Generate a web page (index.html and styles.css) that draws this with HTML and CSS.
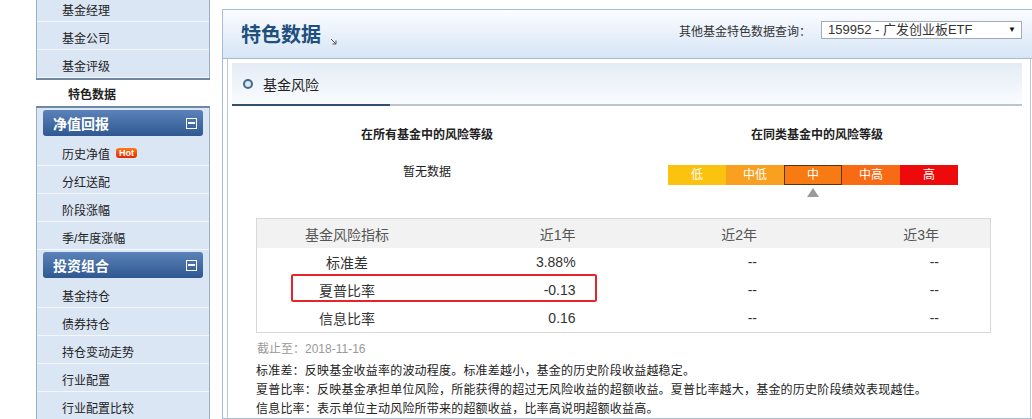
FILE: index.html
```html
<!DOCTYPE html>
<html lang="zh-CN">
<head>
    <meta charset="UTF-8">
    <meta name="viewport" content="width=device-width, initial-scale=1.0">
    <title>特色数据 - 基金风险</title>
    <link rel="stylesheet" href="styles.css">
</head>
<body>
    <div class="page">
        <aside class="sidebar">
            <div class="nav-item">基金经理</div>
            <div class="nav-item">基金公司</div>
            <div class="nav-item">基金评级</div>
            <div class="nav-item active">特色数据</div>

            <div class="nav-head">净值回报<span class="fold"></span></div>
            <div class="nav-item">历史净值<span class="hot">Hot</span></div>
            <div class="nav-item">分红送配</div>
            <div class="nav-item">阶段涨幅</div>
            <div class="nav-item">季/年度涨幅</div>

            <div class="nav-head">投资组合<span class="fold"></span></div>
            <div class="nav-item">基金持仓</div>
            <div class="nav-item">债券持仓</div>
            <div class="nav-item">持仓变动走势</div>
            <div class="nav-item">行业配置</div>
            <div class="nav-item">行业配置比较</div>
        </aside>

        <main class="panel">
            <div class="panel-head">
                <h1 class="title">特色数据
                    <svg class="corner" width="7" height="7" viewBox="0 0 7 7"><path d="M1 1 L6 6 M6 2.5 V6 H2.5" fill="none" stroke="#555" stroke-width="1"/></svg>
                </h1>
                <div class="query">
                    <span>其他基金特色数据查询：</span>
                    <div class="select">159952 - 广发创业板ETF<span class="caret">▼</span></div>
                </div>
            </div>

            <div class="panel-body">
                <section class="box">
                    <div class="box-head"><span class="dot"></span>基金风险</div>
                    <div class="box-line"><b></b><i></i></div>

                    <div class="levels">
                        <div class="level">
                            <h3>在所有基金中的风险等级</h3>
                            <p class="empty">暂无数据</p>
                        </div>
                        <div class="level">
                            <h3>在同类基金中的风险等级</h3>
                            <div class="risk-bar">
                                <span class="r1">低</span>
                                <span class="r2">中低</span>
                                <span class="r3 current">中</span>
                                <span class="r4">中高</span>
                                <span class="r5">高</span>
                            </div>
                            <div class="marker"><span></span></div>
                        </div>
                    </div>

                    <div class="table-wrap">
                        <table class="risk-table">
                            <tr>
                                <th class="name">基金风险指标</th>
                                <th>近1年</th>
                                <th>近2年</th>
                                <th>近3年</th>
                            </tr>
                            <tr>
                                <td class="name">标准差</td>
                                <td>3.88%</td>
                                <td>--</td>
                                <td>--</td>
                            </tr>
                            <tr>
                                <td class="name">夏普比率</td>
                                <td>-0.13</td>
                                <td>--</td>
                                <td>--</td>
                            </tr>
                            <tr>
                                <td class="name">信息比率</td>
                                <td>0.16</td>
                                <td>--</td>
                                <td>--</td>
                            </tr>
                        </table>
                        <div class="highlight"></div>
                    </div>

                    <p class="date">截止至：2018-11-16</p>
                    <p class="note">标准差：反映基金收益率的波动程度。标准差越小，基金的历史阶段收益越稳定。</p>
                    <p class="note">夏普比率：反映基金承担单位风险，所能获得的超过无风险收益的超额收益。夏普比率越大，基金的历史阶段绩效表现越佳。</p>
                    <p class="note">信息比率：表示单位主动风险所带来的超额收益，比率高说明超额收益高。</p>
                </section>
            </div>
        </main>
    </div>
</body>
</html>
```

FILE: styles.css
```css
body {
    margin: 0;
    font-family: "Liberation Sans", "Noto Sans CJK SC", sans-serif;
    font-size: 12px;
    color: #333;
    background: #fff;
    overflow: hidden;
}

.page {
    display: flex;
    gap: 12px;
    padding-left: 36px;
    height: 419px;
}

/* Menu gauche */
.sidebar {
    flex: none;
    width: 172px;
    margin-top: -6px;
    background: #dbe6f4;
    border-left: 1px solid #9ab0c8;
    border-right: 1px solid #9ab0c8;
}

.nav-item {
    height: 24px;
    padding-top: 3px;
    padding-left: 25px;
    border-bottom: 1px solid #f3f7fc;
    color: #222;
    display: flex;
    align-items: center;
}

.nav-item.active {
    height: 25px;
    padding-top: 1px;
    margin: 0 -1px;
    padding-left: 32px;
    background: #fff;
    border-top: 2px solid #6f87a4;
    border-bottom: 2px solid #6f87a4;
    font-weight: bold;
}

.nav-head {
    height: 26px;
    margin: 2px 6px;
    padding: 0 6px 0 10px;
    border-radius: 3px;
    background: linear-gradient(#5b83b9, #2f5891);
    color: #fff;
    font-size: 14px;
    font-weight: bold;
    display: flex;
    align-items: center;
    justify-content: space-between;
}

.fold {
    width: 9px;
    height: 9px;
    border: 1px solid #fff;
    display: flex;
    align-items: center;
    justify-content: center;
}

.fold::before {
    content: "";
    width: 7px;
    height: 2px;
    background: #fff;
}

.hot {
    margin-left: 6px;
    padding: 0 3px;
    height: 10px;
    line-height: 10px;
    border-radius: 3px;
    background: linear-gradient(#ff7a1a, #e02a00);
    color: #fff;
    font-size: 9px;
    font-weight: bold;
}

/* Panneau principal */
.panel {
    flex: none;
    width: 812px;
    margin-top: 9px;
    border: 1px solid #a9bdd2;
    border-right: none;
}

.panel-head {
    height: 48px;
    padding: 0 13px 0 18px;
    background: linear-gradient(#fbfdff, #d6e5f6);
    border-bottom: 1px solid #a9bdd2;
    display: flex;
    justify-content: space-between;
    align-items: flex-start;
}

.title {
    margin: 15px 0 0;
    font-size: 20px;
    line-height: 20px;
    color: #1f4f7e;
    display: flex;
    align-items: flex-end;
    gap: 9px;
}

.query {
    margin-top: 11px;
    display: flex;
    align-items: center;
    gap: 10px;
    color: #333;
}

.select {
    width: 193px;
    height: 16px;
    line-height: 16px;
    padding-left: 6px;
    background: #fff;
    border: 1px solid #a3abb5;
    font-size: 13px;
    color: #333;
    display: flex;
    justify-content: space-between;
}

.caret {
    font-size: 8px;
    padding-right: 5px;
    color: #111;
}

.panel-body {
    width: 790px;
    height: 360px;
    margin-left: 4px;
    padding: 4px 8px 0 4px;
    border-left: 1px solid #b9c9d9;
    border-right: 1px solid #b9c9d9;
}

/* Bloc risque */
.box-head {
    height: 41px;
    background: linear-gradient(#e3ecf6, #fafcfe);
    font-size: 14px;
    color: #222;
    display: flex;
    align-items: center;
}

.dot {
    width: 6px;
    height: 6px;
    margin: 0 10px 0 11px;
    border: 2px solid #46698b;
    border-radius: 50%;
    background: #d9e7f2;
}

.box-line {
    display: flex;
    height: 2px;
}

.box-line b {
    width: 158px;
    background: #34506b;
}

.box-line i {
    flex: 1;
    background: #b9c6d2;
}

.levels {
    display: grid;
    grid-template-columns: 1fr 1fr;
    padding-right: 10px;
    text-align: center;
}

.level h3 {
    margin: 21px 0 0;
    font-size: 12px;
    line-height: 16px;
    color: #222;
}

.empty {
    margin: 21px 0 0;
    line-height: 16px;
    color: #222;
}

.risk-bar {
    width: 290px;
    margin: 22px auto 0;
    display: flex;
    position: relative;
    left: -4px;
}

.risk-bar span {
    width: 58px;
    height: 20px;
    line-height: 20px;
    color: #fff;
    box-sizing: border-box;
}

.r1 { background: #fbc210; }
.r2 { background: #f9a020; }
.r3 { background: #f77a12; }
.r4 { background: #f86a14; }
.r5 { background: #ee0a0a; }

.risk-bar .current {
    border: 1px solid #5a3414;
    line-height: 18px;
}

.marker {
    display: flex;
    justify-content: center;
    margin-top: 3px;
    position: relative;
    left: -4px;
}

.marker span {
    border-left: 6px solid transparent;
    border-right: 6px solid transparent;
    border-bottom: 9px solid #9a9a9a;
}

/* Tableau */
.table-wrap {
    position: relative;
    width: 735px;
    margin: 21px 0 0 24px;
}

.risk-table {
    width: 735px;
    border-collapse: collapse;
    border: 1px solid #d8d8d8;
    font-size: 14px;
}

.risk-table th {
    height: 29px;
    background: #f2f2f2;
    font-weight: normal;
    color: #555;
    text-align: right;
    padding: 0 51px 0 0;
}

.risk-table td {
    height: 28px;
    text-align: right;
    padding: 0 51px 0 0;
    color: #333;
}

.risk-table .name {
    width: 180px;
    text-align: center;
    padding: 0;
}

.highlight {
    position: absolute;
    left: 35px;
    top: 56px;
    width: 306px;
    height: 28px;
    box-sizing: border-box;
    border: 2px solid #e3262b;
    border-radius: 2px;
}

.date {
    margin: 7px 0 0 25px;
    line-height: 18px;
    color: #999;
}

.date + .note {
    margin-top: 4px;
}

.note {
    margin: 0 0 0 24px;
    line-height: 19px;
    color: #222;
    letter-spacing: 0.2px;
    white-space: nowrap;
}
```
